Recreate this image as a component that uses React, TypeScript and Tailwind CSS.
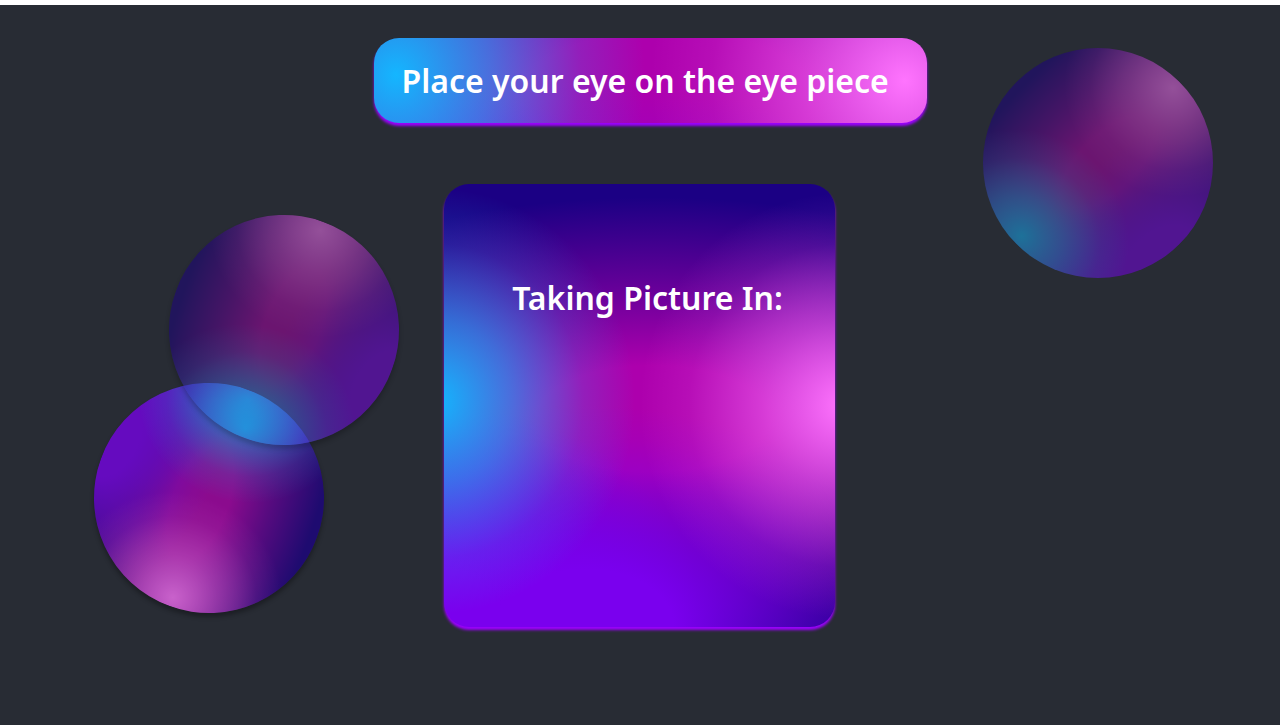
const mesh =
  "bg-[#1b0084] bg-[radial-gradient(46%_48%_at_96%_50%,#ff74fe_0%,rgba(255,116,254,0.5)_40%,rgba(255,116,254,0.12)_76%,rgba(255,116,254,0)_100%),radial-gradient(45%_48%_at_4%_49%,#14b6ff_0%,rgba(20,182,255,0.6)_38%,rgba(20,182,255,0.17)_74%,rgba(20,182,255,0)_100%),radial-gradient(76%_50%_at_38%_100%,#7a00ee_26%,rgba(122,0,238,0.5)_60%,rgba(122,0,238,0.12)_86%,rgba(122,0,238,0)_100%),radial-gradient(60%_48%_at_4%_98%,#7a00ee_24%,rgba(122,0,238,0)_100%),radial-gradient(110%_50%_at_53%_53%,#ad00ad_24%,rgba(173,0,173,0.5)_60%,rgba(173,0,173,0)_100%)] bg-center bg-no-repeat";

type OrbProps = { place: string; turn: string; shadow?: boolean };

function Orb({ place, turn, shadow = false }: OrbProps) {
  return (
    <div
      aria-hidden="true"
      className={`absolute size-[230px] rounded-full ${place} ${
        shadow ? "shadow-[0_4px_4px_rgba(0,0,0,0.4)]" : ""
      }`}
    >
      <div className={`size-full rounded-full ${mesh} ${turn}`} />
    </div>
  );
}

export default function App() {
  return (
    <div className="min-h-screen bg-white pt-[5px] font-['Noto_Sans',sans-serif]">
      <main className="relative flex min-h-[calc(100vh-5px)] flex-col items-center overflow-hidden bg-[#282c34] pt-[33px] pb-24 text-[32px] leading-[50px] font-semibold text-white">
        <Orb place="top-[378px] left-[94px] opacity-75" turn="rotate-[110deg]" shadow />
        <Orb place="top-[210px] left-[169px] opacity-50" turn="-rotate-[70deg]" shadow />
        <Orb place="top-[43px] right-[67px] opacity-50" turn="-rotate-45" />

        <h1
          className={`relative ml-5 h-[85px] w-[553px] rounded-[25px] px-7 pt-[18px] whitespace-nowrap shadow-[0_3px_3px_#9d00ff] bg-size-[553px_553px] ${mesh}`}
        >
          Place your eye on the eye piece
        </h1>

        <section
          className={`relative mt-[61px] mr-px flex h-[443px] w-[391px] justify-center rounded-[25px] pt-[89px] pl-4 shadow-[0_3px_3px_#9d00ff] bg-size-[443px_443px] ${mesh}`}
        >
          <h2 className="whitespace-nowrap">Taking Picture In:</h2>
        </section>
      </main>
    </div>
  );
}
